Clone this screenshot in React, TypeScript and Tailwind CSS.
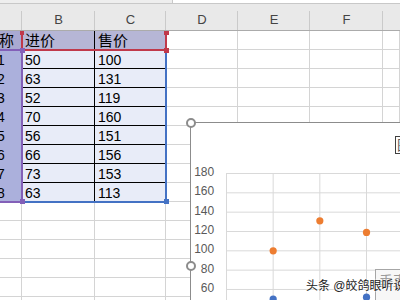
const FONT = { fontFamily: '"Liberation Sans", "Noto Sans CJK SC", sans-serif' };

const COLS = ['', 'B', 'C', 'D', 'E', 'F', ''];
const WIDTHS = ['w-[22px]', 'w-[73px]', 'w-[71px]', 'w-[72px]', 'w-[72px]', 'w-[73px]', 'flex-1'];

const ROWS: [string, string, string][] = [
  ['1', '50', '100'],
  ['2', '63', '131'],
  ['3', '52', '119'],
  ['4', '70', '160'],
  ['5', '56', '151'],
  ['6', '66', '156'],
  ['7', '73', '153'],
  ['8', '63', '113'],
];

const Y_LABELS = ['180', '160', '140', '120', '100', '80', '60', '40'];

// chart helpers (px inside the plot svg, origin = plot top-left)
const STEP_Y = 19.33;
const STEP_X = 46.67;
const py = (v: number) => (180 - v) * (STEP_Y / 20);
const px = (x: number) => x * STEP_X;

function ColumnHeader() {
  return (
    <div className="flex h-[27px] bg-[#e9e9e9] border-b border-[#ababab]">
      {COLS.map((c, i) => (
        <div
          key={i}
          className={`${WIDTHS[i]} relative flex items-end justify-center pb-[2px] text-[13px] text-[#444] leading-[16px]`}
        >
          {c}
          {i < 6 && <div className="absolute right-0 top-[7px] bottom-0 w-px bg-[#cacaca]" />}
        </div>
      ))}
    </div>
  );
}

function Cell({ w, className = '', children }: { w: string; className?: string; children?: React.ReactNode }) {
  return (
    <div className={`${w} h-full overflow-hidden whitespace-nowrap pt-[2px] leading-[16px] ${className}`}>
      {children}
    </div>
  );
}

function Sheet() {
  return (
    <div className="flex flex-col">
      {/* title row */}
      <div className="flex h-[19px]">
        <Cell w={WIDTHS[0]} className="bg-[#a9a9d2] text-[15px]">
          <span className="ml-[-16px]">名称</span>
        </Cell>
        <Cell w={WIDTHS[1]} className="bg-[#b6b6d6] text-[15px] pl-[3px] border-r border-black">
          进价
        </Cell>
        <Cell w={WIDTHS[2]} className="bg-[#b6b6d6] text-[15px] pl-[3px]">
          售价
        </Cell>
        {[3, 4, 5, 6].map((i) => (
          <div key={i} className={`${WIDTHS[i]} border-r border-b border-[#d4d4d4]`} />
        ))}
      </div>
      {ROWS.map(([a, b, c], r) => (
        <div key={r} className="flex h-[19px]">
          <Cell w={WIDTHS[0]} className="bg-[#abb0dc] text-[14px]">
            <span className="ml-[-3px]">{a}</span>
          </Cell>
          <Cell w={WIDTHS[1]} className="bg-[#e8ecf8] text-[14px] pl-[3px] border-r border-b border-black">
            {b}
          </Cell>
          <Cell w={WIDTHS[2]} className="bg-[#e8ecf8] text-[14px] pl-[3px] border-b border-black">
            {c}
          </Cell>
          {[3, 4, 5, 6].map((i) => (
            <div key={i} className={`${WIDTHS[i]} border-r border-b border-[#d4d4d4]`} />
          ))}
        </div>
      ))}
      {Array.from({ length: 6 }, (_, r) => (
        <div key={r} className="flex h-[19px]">
          {WIDTHS.map((w, i) => (
            <div key={i} className={`${w} border-r border-b border-[#d4d4d4]`} />
          ))}
        </div>
      ))}
    </div>
  );
}

function Selections() {
  return (
    <>
      {/* A2:A9 purple */}
      <div className="absolute left-[-4px] top-[49px] w-[27px] h-[154px] border-2 border-[#8360b8]" />
      {/* B1:C1 red */}
      <div className="absolute left-[21px] top-[31px] w-[146px] h-[20px] border-x-2 border-b-2 border-[#c0394b]" />
      {/* B2:C9 blue */}
      <div className="absolute left-[21px] top-[50px] w-[146px] h-[153px] border-r-2 border-b-2 border-[#4472c4]" />
      <div className="absolute left-[20px] top-[31px] w-[4px] h-[4px] bg-[#c0394b]" />
      <div className="absolute left-[164px] top-[31px] w-[5px] h-[4px] bg-[#c0394b]" />
      <div className="absolute left-[164px] top-[48px] w-[5px] h-[5px] bg-[#c0394b]" />
      <div className="absolute left-[20px] top-[48px] w-[5px] h-[5px] bg-[#8360b8]" />
      <div className="absolute left-[20px] top-[199px] w-[5px] h-[5px] bg-[#8360b8]" />
      <div className="absolute left-[164px] top-[199px] w-[5px] h-[5px] bg-[#4472c4]" />
    </>
  );
}

function Chart() {
  const orange = [
    [1, 100],
    [2, 131],
    [3, 119],
  ];
  const blue = [
    [1, 50],
    [3, 52],
  ];
  return (
    <div className="absolute left-[190px] top-[122px] w-[260px] h-[220px] border border-[#8c8c8c] bg-white">
      <div className="absolute left-[204px] top-[13px] border border-[#404040] px-[1px] text-[14px] leading-[16px] text-[#595959] whitespace-nowrap">
        图表标题
      </div>
      <div className="flex pt-[40px]">
        <div className="w-[25px] flex flex-col items-end text-[12px] text-[#595959]">
          {Y_LABELS.map((l) => (
            <div key={l} className="h-[19.33px] leading-[19.33px]">
              {l}
            </div>
          ))}
        </div>
        <svg width="240" height="160" className="ml-[12px] mt-[9.5px]">
          {Array.from({ length: 8 }, (_, i) => (
            <line key={`h${i}`} x1={0} x2={240} y1={i * STEP_Y + 0.5} y2={i * STEP_Y + 0.5} stroke="#d9d9d9" />
          ))}
          {Array.from({ length: 5 }, (_, i) => (
            <line key={`v${i}`} x1={px(i) + 0.5} x2={px(i) + 0.5} y1={0} y2={160} stroke="#d9d9d9" />
          ))}
          {orange.map(([x, v]) => (
            <circle key={`o${x}`} cx={px(x) + 0.5} cy={py(v) + 0.5} r={3.6} fill="#ed7d31" />
          ))}
          {blue.map(([x, v]) => (
            <circle key={`b${x}`} cx={px(x) + 0.5} cy={py(v) + 0.5} r={3.6} fill="#4472c4" />
          ))}
        </svg>
      </div>
      <div className="absolute left-[184px] top-[146px] h-[40px] w-[100px] border border-[#a6a6a6] bg-[#f7f7f7] pl-[3px] pt-[2px] text-[14px] leading-[18px] text-[#9a9a9a] whitespace-nowrap">
        垂直(值)轴 主要网格线
      </div>
      <div className="absolute left-[-5px] top-[-5px] w-[10px] h-[10px] rounded-full border-2 border-[#8c8c8c] bg-white" />
      <div className="absolute left-[-5px] top-[138px] w-[10px] h-[10px] rounded-full border-2 border-[#8c8c8c] bg-white" />
    </div>
  );
}

export default function App() {
  return (
    <div className="relative w-[400px] h-[300px] overflow-hidden bg-white text-black" style={FONT}>
      <div className="flex h-[4px] border-b border-[#c8c8c8] bg-[#eeeeee]">
        <div className="ml-[172px] flex-1 bg-white border-l border-[#c8c8c8]" />
      </div>
      <ColumnHeader />
      <Sheet />
      <Selections />
      <Chart />
      <div
        className="absolute left-[306px] top-[279px] text-[12px] leading-[14px] text-[#222] whitespace-nowrap"
        style={{ textShadow: '0 0 2px #fff, 0 0 2px #fff' }}
      >
        头条 @皎鸽眼听说
      </div>
    </div>
  );
}
